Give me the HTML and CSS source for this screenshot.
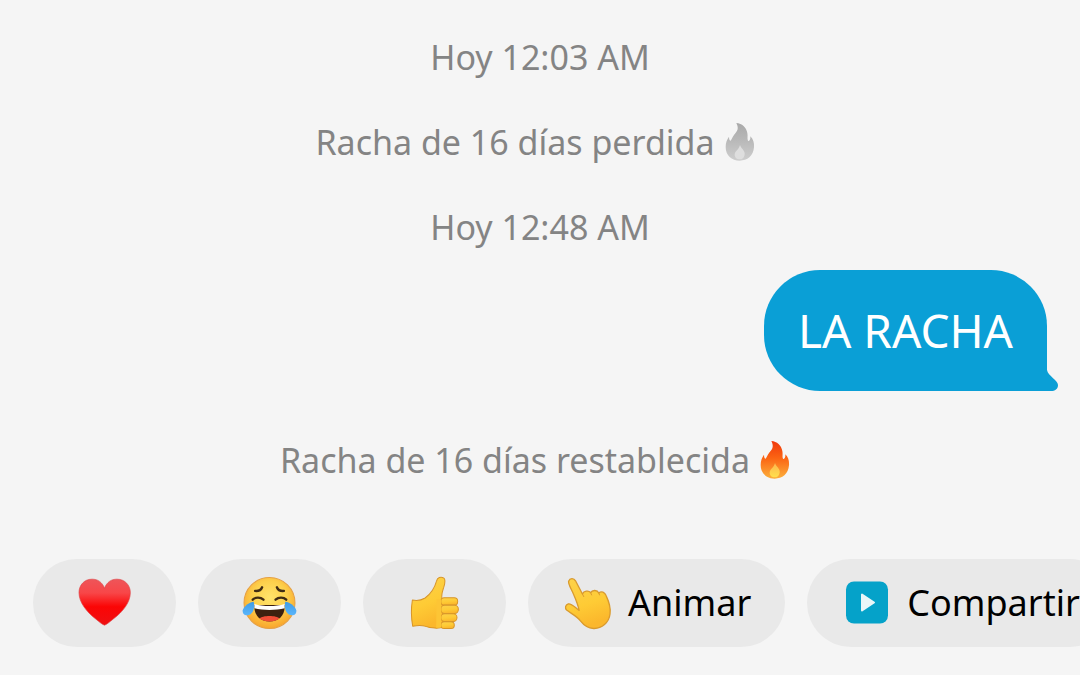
FILE: index.html
```html
<!DOCTYPE html>
<html lang="es">
<head>
    <meta charset="UTF-8">
    <meta name="viewport" content="width=device-width, initial-scale=1">
    <title>Chat</title>
    <link rel="stylesheet" href="styles.css">
</head>
<body>
<svg class="defs" width="0" height="0" aria-hidden="true">
    <defs>
        <linearGradient id="fire-on" x1="0" y1="0" x2="0" y2="1">
            <stop offset="0" stop-color="#f0380c"/>
            <stop offset="0.45" stop-color="#fb6413"/>
            <stop offset="1" stop-color="#fcb03c"/>
        </linearGradient>
        <linearGradient id="fire-on-core" x1="0" y1="0" x2="0" y2="1">
            <stop offset="0" stop-color="#fdb64e"/>
            <stop offset="1" stop-color="#ffe04c"/>
        </linearGradient>
        <linearGradient id="fire-off" x1="0" y1="0" x2="0" y2="1">
            <stop offset="0" stop-color="#a9a9a9"/>
            <stop offset="0.45" stop-color="#b8b8b8"/>
            <stop offset="1" stop-color="#cecece"/>
        </linearGradient>
        <linearGradient id="heart-fill" x1="0" y1="0" x2="0" y2="1">
            <stop offset="0" stop-color="#ee5559"/>
            <stop offset="0.3" stop-color="#f84648"/>
            <stop offset="0.6" stop-color="#fb0505"/>
            <stop offset="1" stop-color="#ee1012"/>
        </linearGradient>
        <radialGradient id="face-fill" cx="0.5" cy="0.4" r="0.6">
            <stop offset="0" stop-color="#ffe36c"/>
            <stop offset="0.55" stop-color="#fdd04c"/>
            <stop offset="1" stop-color="#f9a52b"/>
        </radialGradient>
        <linearGradient id="tear-fill" x1="0" y1="0" x2="0" y2="1">
            <stop offset="0" stop-color="#3f9be6"/>
            <stop offset="1" stop-color="#5bb6fb"/>
        </linearGradient>
        <linearGradient id="hand-fill" x1="0" y1="0" x2="0.3" y2="1">
            <stop offset="0" stop-color="#fdd24a"/>
            <stop offset="0.6" stop-color="#fecb35"/>
            <stop offset="1" stop-color="#fbb72c"/>
        </linearGradient>
    </defs>
</svg>

<main class="chat">
    <p class="notice">Hoy 12:03 AM</p>
    <p class="notice notice-streak">
        Racha de 16 días perdida
        <svg class="fire" viewBox="0 0 90 114" aria-hidden="true">
            <path fill="url(#fire-off)" d="M34 0C51 1 64 13 67 30C69 40 66 47 69 53C73 56 77 50 76 40C85 48 88 60 87 73C85 99 67 113 44 113C20 113 2 97 2 72C2 59 6 49 12 41C12 49 14 53 17 53C22 45 25 38 31 31C40 21 40 12 34 0Z"/>
            <path fill="#dedede" d="M45 66C49 78 61 83 59 95C57 105 52 109 44 109C35 109 29 103 29 95C29 84 42 80 45 66Z"/>
        </svg>
    </p>
    <p class="notice">Hoy 12:48 AM</p>

    <div class="bubble">
        LA RACHA
        <svg class="bubble-tail" viewBox="0 0 12 21" aria-hidden="true">
            <path fill="#0a9fd6" d="M0 0H1C2 6 12 10 12 15C12 19 9 21 5 21H0Z"/>
        </svg>
    </div>

    <p class="notice notice-streak">
        Racha de 16 días restablecida
        <svg class="fire" viewBox="0 0 90 114" aria-hidden="true">
            <path fill="url(#fire-on)" d="M34 0C51 1 64 13 67 30C69 40 66 47 69 53C73 56 77 50 76 40C85 48 88 60 87 73C85 99 67 113 44 113C20 113 2 97 2 72C2 59 6 49 12 41C12 49 14 53 17 53C22 45 25 38 31 31C40 21 40 12 34 0Z"/>
            <path fill="url(#fire-on-core)" d="M45 66C49 78 61 83 59 95C57 105 52 109 44 109C35 109 29 103 29 95C29 84 42 80 45 66Z"/>
        </svg>
    </p>
</main>

<div class="quick-replies">
    <button class="chip" type="button" aria-label="Corazón">
        <svg class="chip-emoji" viewBox="51 34 164 160" aria-hidden="true">
            <path fill="url(#heart-fill)" stroke="#e04044" stroke-width="2" d="M133 70C126 51 112 43 96 43C72 43 57 61 57 83C57 112 79 140 106 161C118 170 125 178 133 180C141 178 148 170 160 161C188 140 210 112 210 83C210 61 194 43 170 43C154 43 140 51 133 70Z"/>
        </svg>
    </button>
    <button class="chip" type="button" aria-label="Risa">
        <svg class="chip-emoji" viewBox="37 32 164 160" aria-hidden="true">
            <circle cx="119" cy="112" r="76" fill="url(#face-fill)" stroke="#e5a044" stroke-width="3"/>
            <g fill="none" stroke="#402b14" stroke-width="7" stroke-linecap="round">
                <path d="M76 76C87 77 94 73 97 65"/>
                <path d="M141 65C144 73 151 77 162 76"/>
                <path d="M69 102C77 94 92 94 101 102"/>
                <path d="M137 102C146 94 161 94 169 102"/>
            </g>
            <path fill="#3d210f" d="M74 118H164C166 150 146 167 119 167C92 167 72 150 74 118Z"/>
            <path fill="#f04d35" d="M89 158C97 148 141 148 149 158C134 170 104 170 89 158Z"/>
            <path fill="#fff" d="M74 115C102 123 136 123 164 115V128C138 134 100 134 74 128Z"/>
            <path fill="url(#tear-fill)" d="M72 108C61 108 41 122 39 134C38 145 47 151 57 148C70 144 76 126 72 108Z"/>
            <path fill="url(#tear-fill)" d="M166 108C177 108 197 122 199 134C200 145 191 151 181 148C168 144 162 126 166 108Z"/>
        </svg>
    </button>
    <button class="chip" type="button" aria-label="Me gusta">
        <svg class="chip-emoji" viewBox="37 32 164 160" aria-hidden="true">
            <g fill="url(#hand-fill)" stroke="#d89528" stroke-width="3" stroke-linejoin="round">
                <path d="M53 103C66 106 81 103 91 97C108 85 119 69 125 47C127 36 138 32 147 38C154 44 149 57 146 67C142 79 139 87 141 99L146 183C134 189 109 188 90 181C80 178 66 179 54 181C49 154 49 128 53 103Z"/>
                <rect x="138" y="96" width="50" height="22" rx="10"/>
                <rect x="138" y="119" width="52" height="24" rx="11"/>
                <rect x="138" y="144" width="48" height="23" rx="11"/>
                <rect x="138" y="168" width="40" height="20" rx="10"/>
            </g>
            <path fill="#fdc535" d="M125 101H139V184C134 186 129 186 124 186Z"/>
        </svg>
    </button>
    <button class="chip chip-text" type="button">
        <svg class="chip-icon" viewBox="44 32 146 160" aria-hidden="true">
            <path fill="url(#hand-fill)" stroke="#d99a2e" stroke-width="4" stroke-linejoin="round" d="M58 44C62 34 74 34 79 43L100 83C104 74 119 71 125 79C130 70 145 70 150 80C158 73 168 78 172 88C180 105 187 124 184 144C181 170 159 189 134 188C116 187 104 178 94 165C84 151 65 142 52 132C46 126 48 116 57 113C68 111 78 125 90 133C87 118 80 100 73 84C67 69 56 53 58 44Z"/>
            <path fill="none" stroke="#d99a2e" stroke-width="3" stroke-linecap="round" d="M100 83L104 91M125 79L128 86M150 80L152 86"/>
        </svg>
        <span>Animar</span>
    </button>
    <button class="chip chip-text" type="button">
        <svg class="chip-icon" viewBox="0 0 48 48" aria-hidden="true">
            <rect x="3" y="2" width="42" height="42" rx="8" fill="#05a2c9"/>
            <path fill="#e9f6f8" stroke="#e9f6f8" stroke-width="2" stroke-linejoin="round" d="M19 15V31L31 23Z"/>
        </svg>
        <span>Compartir</span>
    </button>
</div>
</body>
</html>
```
FILE: styles.css
```css
* {
    margin: 0;
    padding: 0;
    box-sizing: border-box;
}
body {
    min-height: 100vh;
    background-color: #f5f5f5;
    font-family: "Noto Sans", "Open Sans", sans-serif;
    overflow: hidden;
}
.defs {
    position: absolute;
}
.chat {
    display: flex;
    flex-direction: column;
    padding: 37px 33px 0;
}
.notice {
    margin-bottom: 45px;
    color: #848484;
    font-size: 34px;
    line-height: 40px;
    text-align: center;
}
.notice-streak {
    display: flex;
    align-items: center;
    justify-content: center;
    gap: 10px;
    padding-right: 10px;
}
.fire {
    width: 30px;
    height: 38px;
}
.bubble {
    position: relative;
    align-self: flex-end;
    margin: -22px 0 49px;
    padding: 30px 34px 31px;
    border-radius: 56px 56px 0 56px;
    background-color: #0a9fd6;
    color: #fff;
    font-size: 46px;
    line-height: 60px;
}
/* little tail outside the bottom right corner */
.bubble-tail {
    position: absolute;
    right: -11px;
    bottom: 0;
    width: 12px;
    height: 21px;
}
.quick-replies {
    display: flex;
    gap: 22px;
    padding: 34px 33px 28px;
    overflow: hidden;
}
.chip {
    display: flex;
    flex: none;
    align-items: center;
    justify-content: center;
    min-width: 143px;
    height: 88px;
    border: none;
    border-radius: 44px;
    background-color: #e9e9e9;
    color: #000;
    font-family: inherit;
    font-size: 36px;
    line-height: 48px;
    cursor: pointer;
}
.chip-text {
    gap: 16px;
    padding: 0 34px 0 36px;
}
.chip-emoji {
    width: 55px;
    height: 54px;
}
.chip-icon {
    width: 48px;
    height: 53px;
}
```
